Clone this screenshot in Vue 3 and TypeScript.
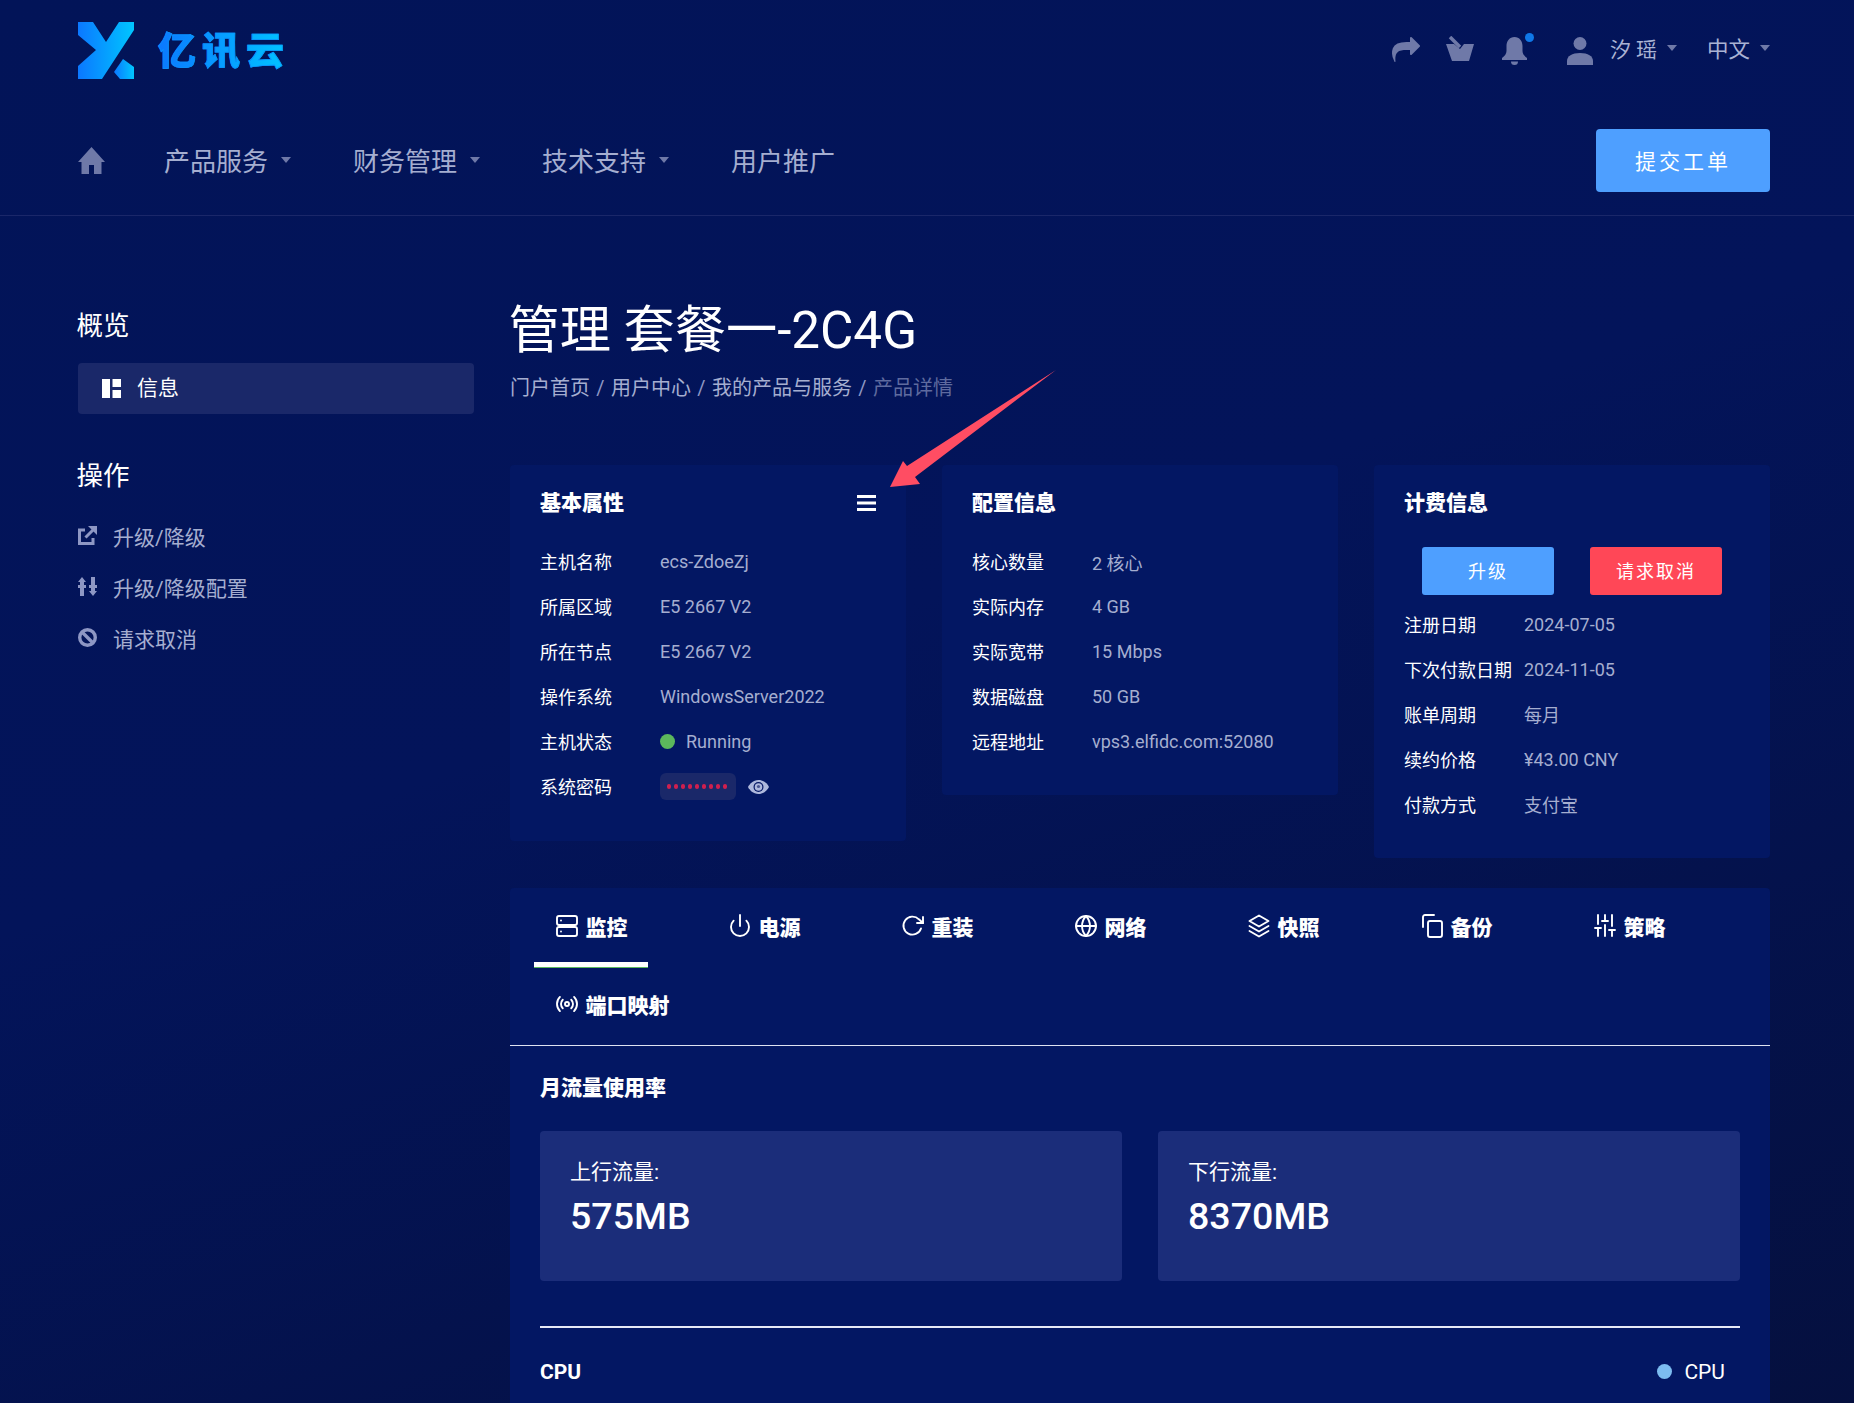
<script setup lang="ts">
interface Row {
  label: string
  value: string
}

const navItems = [
  { label: '产品服务', caret: true },
  { label: '财务管理', caret: true },
  { label: '技术支持', caret: true },
  { label: '用户推广', caret: false },
]

const crumbs = ['门户首页', '用户中心', '我的产品与服务']

const basicRows: Row[] = [
  { label: '主机名称', value: 'ecs-ZdoeZj' },
  { label: '所属区域', value: 'E5 2667 V2' },
  { label: '所在节点', value: 'E5 2667 V2' },
  { label: '操作系统', value: 'WindowsServer2022' },
]

const configRows: Row[] = [
  { label: '核心数量', value: '2 核心' },
  { label: '实际内存', value: '4 GB' },
  { label: '实际宽带', value: '15 Mbps' },
  { label: '数据磁盘', value: '50 GB' },
  { label: '远程地址', value: 'vps3.elfidc.com:52080' },
]

const billingRows: Row[] = [
  { label: '注册日期', value: '2024-07-05' },
  { label: '下次付款日期', value: '2024-11-05' },
  { label: '账单周期', value: '每月' },
  { label: '续约价格', value: '¥43.00 CNY' },
  { label: '付款方式', value: '支付宝' },
]

const tabs = [
  {
    label: '监控',
    icon: '<rect x="2" y="2" width="20" height="9" rx="2"/><rect x="2" y="13" width="20" height="9" rx="2"/><path d="M6 6.5h.01M6 17.5h.01"/>',
  },
  { label: '电源', icon: '<path d="M18.36 6.64a9 9 0 1 1-12.73 0"/><path d="M12 1v11"/>' },
  { label: '重装', icon: '<path d="M22 3v6h-6"/><path d="M20 14.5a9 9 0 1 1-2.1-9.2L22 9"/>' },
  {
    label: '网络',
    icon: '<circle cx="12" cy="12" r="10"/><path d="M2 12h20"/><path d="M12 2a15.3 15.3 0 0 1 4 10 15.3 15.3 0 0 1-4 10 15.3 15.3 0 0 1-4-10 15.3 15.3 0 0 1 4-10z"/>',
  },
  { label: '快照', icon: '<path d="M12 1.5 2.5 7l9.5 5.5L21.5 7z"/><path d="m2.5 12 9.5 5.5 9.5-5.5"/><path d="m2.5 17 9.5 5.5 9.5-5.5"/>' },
  { label: '备份', icon: '<rect x="8" y="7" width="14" height="16" rx="2"/><path d="M3 13V3a2 2 0 0 1 2-2h9"/>' },
  {
    label: '策略',
    icon: '<path d="M5 22v-8M5 10V1M12 22v-11M12 7V1M19 22v-6M19 12V1M2 14h6M9 7h6M16 16h6"/>',
  },
  {
    label: '端口映射',
    icon: '<circle cx="12" cy="12" r="2"/><path d="M16.24 7.76a6 6 0 0 1 0 8.49M7.76 16.24a6 6 0 0 1 0-8.49M19.07 4.93a10 10 0 0 1 0 14.14M4.93 19.07a10 10 0 0 1 0-14.14"/>',
  },
]

const traffic = [
  { label: '上行流量:', value: '575MB' },
  { label: '下行流量:', value: '8370MB' },
]
</script>

<template>
  <div class="page">
    <header class="header">
      <div class="topbar">
        <div class="logo">
          <svg class="logo-mark" viewBox="0 0 56 57">
            <defs>
              <linearGradient id="logoFill" x1="0" y1="0" x2="1" y2="0">
                <stop offset="0" stop-color="#0b78ff" />
                <stop offset="1" stop-color="#00c6ff" />
              </linearGradient>
            </defs>
            <path fill="url(#logoFill)" d="M0 0h15l13 20L41 0h15v8L24 57H0V44l18-16L0 13z" />
            <path fill="url(#logoFill)" d="M45 37l11 8v12H42l-6-7z" />
          </svg>
          <span class="logo-text">亿讯云</span>
        </div>
        <div class="top-actions">
          <svg class="ico share" viewBox="0 0 1792 1792">
            <path d="M1792 640q0 26-19 45l-512 512q-19 19-45 19t-45-19-19-45v-256h-224q-98 0-175.5 6t-154 21.5-133 42.5-105.5 69.5-80 101-48.5 138.5-17.5 181q0 55 5 123 0 6 2.5 23.5t2.5 26.5q0 15-8.5 25t-23.5 10q-16 0-28-17-7-9-13-22t-13.5-30-10.5-24q-127-285-127-451 0-199 53-333 162-403 875-403h224v-256q0-26 19-45t45-19 45 19l512 512q19 19 19 45z" />
          </svg>
          <svg class="ico basket" viewBox="0 0 28 25">
            <path d="M0 8h8l6 5 4-5h10l-5 17H6z" />
            <path d="M4 1l10 10" stroke="#6f79a8" stroke-width="3.5" />
          </svg>
          <span class="bell">
            <svg class="ico" viewBox="0 0 25 29">
              <path d="M12.5 1C7.5 1 4.5 5 4.5 10V15c0 3-2 5-4.5 7v2h25v-2C22.5 20 20.5 18 20.5 15v-5C20.5 5 17.5 1 12.5 1z" />
              <path d="M9 25.5h7a3.5 3.5 0 0 1-7 0z" />
            </svg>
            <i class="bell-dot"></i>
          </span>
          <svg class="ico user" viewBox="0 0 26 28">
            <circle cx="13" cy="6.5" r="6.5" />
            <path d="M0 28v-4c0-5 5-8 13-8s13 3 13 8v4z" />
          </svg>
          <span class="top-link user-name">汐瑶<i class="caret"></i></span>
          <span class="top-link lang">中文<i class="caret"></i></span>
        </div>
      </div>
      <div class="navbar">
        <nav class="nav">
          <svg class="home" viewBox="0 0 27 27">
            <path d="M13.5 0 27 15h-3.5v12H16v-9h-5v9H3.5V15H0z" />
          </svg>
          <a v-for="item in navItems" :key="item.label" class="nav-item">
            {{ item.label }}<i v-if="item.caret" class="caret"></i>
          </a>
        </nav>
        <button class="submit-btn">提交工单</button>
      </div>
    </header>

    <div class="body">
      <aside class="sidebar">
        <h3 class="side-title">概览</h3>
        <div class="side-active">
          <svg class="side-active-icon" viewBox="0 0 19 19">
            <path d="M0 0h8v19H0zM10.5 0H19v8h-8.5zM10.5 11H19v8h-8.5z" />
          </svg>
          <span class="side-active-text">信息</span>
        </div>
        <h3 class="side-title second">操作</h3>
        <ul class="side-links">
          <li>
            <svg class="side-icon" viewBox="0 0 19 19">
              <path d="M7 4H1.5v13.5H15V12" fill="none" stroke="#8e97c4" stroke-width="3" />
              <path d="M7.5 11.5 15 4" fill="none" stroke="#8e97c4" stroke-width="3" />
              <path d="M10 0h9v9z" />
            </svg>
            升级/降级
          </li>
          <li>
            <svg class="side-icon" viewBox="0 0 19 19">
              <path d="M4 0l4 5H6v14H2V5H0zM15 19l-4-5h2V0h4v14h2z" />
              <path d="M0 8h8v3H0zM11 8h8v3h-8z" />
            </svg>
            升级/降级配置
          </li>
          <li>
            <svg class="side-icon" viewBox="0 0 19 19">
              <circle cx="9.5" cy="9.5" r="7.8" fill="none" stroke="#8e97c4" stroke-width="3.4" />
              <path d="M4 4l11 11" stroke="#8e97c4" stroke-width="3.4" />
            </svg>
            请求取消
          </li>
        </ul>
      </aside>

      <main class="main">
        <h1 class="title">管理 套餐一-2C4G</h1>
        <div class="crumbs">
          <template v-for="crumb in crumbs" :key="crumb">
            <span>{{ crumb }}</span><span class="sep">/</span>
          </template>
          <span class="crumb-last">产品详情</span>
        </div>

        <div class="cards">
          <section class="card">
            <div class="card-head">
              <h4>基本属性</h4>
              <svg class="menu-icon" viewBox="0 0 19 16">
                <path d="M0 0h19v3H0zM0 6.5h19v3H0zM0 13h19v3H0z" />
              </svg>
            </div>
            <div v-for="row in basicRows" :key="row.label" class="row">
              <span class="row-label">{{ row.label }}</span>
              <span class="row-value">{{ row.value }}</span>
            </div>
            <div class="row">
              <span class="row-label">主机状态</span>
              <span class="row-value status"><i class="dot"></i>Running</span>
            </div>
            <div class="row">
              <span class="row-label">系统密码</span>
              <span class="row-value secret">
                <span class="pill"><i v-for="n in 9" :key="n"></i></span>
                <svg class="eye" viewBox="0 0 21 14">
                  <path d="M10.5 0C16 0 19.5 4 21 7c-1.5 3-5 7-10.5 7S1.5 10 0 7c1.5-3 5-7 10.5-7z" fill="#aeb8dc" />
                  <circle cx="10.5" cy="7" r="5" fill="#041764" />
                  <circle cx="10.5" cy="7" r="3.8" fill="#aeb8dc" />
                  <circle cx="10.5" cy="6.5" r="1.6" fill="#4a5690" />
                </svg>
              </span>
            </div>
          </section>

          <section class="card">
            <div class="card-head"><h4>配置信息</h4></div>
            <div v-for="row in configRows" :key="row.label" class="row">
              <span class="row-label">{{ row.label }}</span>
              <span class="row-value">{{ row.value }}</span>
            </div>
          </section>

          <section class="card">
            <div class="card-head"><h4>计费信息</h4></div>
            <div class="card-actions">
              <button class="btn primary">升级</button>
              <button class="btn danger">请求取消</button>
            </div>
            <div v-for="row in billingRows" :key="row.label" class="row">
              <span class="row-label">{{ row.label }}</span>
              <span class="row-value">{{ row.value }}</span>
            </div>
          </section>
        </div>

        <section class="panel">
          <div class="tabs">
            <a v-for="(tab, i) in tabs" :key="tab.label" :class="['tab', { active: i === 0 }]">
              <svg
                class="tab-icon"
                viewBox="0 0 24 24"
                fill="none"
                stroke="currentColor"
                stroke-width="1.9"
                stroke-linecap="round"
                stroke-linejoin="round"
                v-html="tab.icon"
              ></svg>
              {{ tab.label }}
            </a>
          </div>
          <div class="panel-body">
            <h4 class="panel-title">月流量使用率</h4>
            <div class="stats">
              <div v-for="item in traffic" :key="item.label" class="stat">
                <div class="stat-label">{{ item.label }}</div>
                <div class="stat-value">{{ item.value }}</div>
              </div>
            </div>
            <hr class="divider" />
            <div class="chart-head">
              <h4>CPU</h4>
              <span class="legend"><i></i>CPU</span>
            </div>
          </div>
        </section>

        <svg class="arrow" viewBox="0 0 170 120">
          <path d="M0 117 13 91 17 96 166 0 25 107 30 114z" />
        </svg>
      </main>
    </div>
  </div>
</template>

<style>
html,
body {
  margin: 0;
  background: #021356;
}
</style>

<style scoped>
.page {
  height: 100vh;
  overflow: hidden;
  font-family: Roboto, "Noto Sans CJK SC", sans-serif;
  color: #fff;
  background: linear-gradient(160deg, #021458 0%, #03145a 45%, #05103f 100%);
}

/* Header */
.header {
  height: 216px;
  box-sizing: border-box;
  padding: 0 84px 0 78px;
  border-bottom: 1px solid #1a2769;
}

.topbar {
  display: flex;
  align-items: center;
  justify-content: space-between;
  height: 101px;
  padding-bottom: 8px;
}

.logo {
  display: flex;
  align-items: center;
  gap: 24px;
}

.logo-mark {
  width: 56px;
  height: 57px;
}

.logo-text {
  font-size: 38px;
  line-height: 42px;
  font-weight: 900;
  letter-spacing: 6px;
  background: linear-gradient(90deg, #0b78ff, #00c6ff);
  -webkit-background-clip: text;
  background-clip: text;
  color: transparent;
  -webkit-text-stroke: 0.7px #0a94ff;
}

.top-actions {
  display: flex;
  align-items: center;
  color: #aab3d4;
  font-size: 21px;
}

.ico {
  display: block;
  fill: #6f79a8;
}

.share {
  width: 28px;
  height: 28px;
  margin: -2px 26px 0 0;
}

.basket {
  width: 28px;
  height: 25px;
  margin-right: 28px;
  margin-top: -4px;
}

.bell {
  position: relative;
  width: 25px;
  height: 29px;
  margin-right: 40px;
}

.bell-dot {
  position: absolute;
  top: -3px;
  right: -7px;
  width: 9px;
  height: 9px;
  border-radius: 50%;
  background: #0f78e8;
}

.user {
  width: 26px;
  height: 28px;
  margin-right: 17px;
}

.top-link {
  display: flex;
  align-items: center;
  margin-top: -6px;
}

.user-name {
  letter-spacing: 5px;
  margin-right: 30px;
}

.lang {
  font-size: 21.5px;
}

.lang .caret {
  margin-left: 10px;
}

.caret {
  display: inline-block;
  width: 0;
  height: 0;
  margin-left: 5px;
  border-style: solid;
  border-width: 6px 5.5px 0;
  border-color: #6f79a8 transparent transparent;
  vertical-align: middle;
}

.navbar {
  display: flex;
  align-items: flex-start;
  justify-content: space-between;
  padding-top: 20px;
}

.nav {
  display: flex;
  align-items: center;
  height: 63px;
}

.home {
  width: 27px;
  height: 27px;
  fill: #6f79a8;
  margin-right: 59px;
}

.nav-item {
  display: flex;
  align-items: center;
  width: 189px;
  margin-top: -2px;
  font-size: 26px;
  color: #a5aed0;
}

.nav-item .caret {
  margin-left: 13px;
}

.submit-btn {
  width: 174px;
  height: 63px;
  padding: 0 0 2px;
  border: none;
  border-radius: 4px;
  background: #4e9fff;
  color: #fff;
  font: inherit;
  font-size: 21px;
  letter-spacing: 3px;
}

/* Body layout */
.body {
  display: flex;
  gap: 36px;
  padding: 0 84px 0 78px;
}

.sidebar {
  width: 396px;
  flex: none;
  padding-top: 92px;
}

.side-title {
  margin: 0 0 0 -1.5px;
  font-size: 26.5px;
  line-height: 36px;
  font-weight: 400;
}

.side-title.second {
  margin-top: 44px;
}

.side-active {
  display: flex;
  align-items: center;
  gap: 16px;
  height: 51px;
  margin-top: 19px;
  padding-left: 24px;
  border-radius: 4px;
  background: #1a2869;
  font-size: 21px;
}

.side-active-text {
  margin-top: -5px;
}

.side-active-icon {
  width: 19px;
  height: 19px;
  fill: #fff;
}

.side-links {
  list-style: none;
  margin: 16px 0 0;
  padding: 0;
}

.side-links li {
  display: flex;
  align-items: center;
  gap: 16px;
  height: 51px;
  font-size: 21px;
  color: #a5aed0;
}

.side-icon {
  width: 19px;
  height: 19px;
  fill: #8e97c4;
}

.main {
  position: relative;
  flex: 1;
  min-width: 0;
  padding-top: 84px;
}

.title {
  margin: 1px 0 -1px -1.5px;
  font-size: 51.2px;
  line-height: 60px;
  font-weight: 400;
}

.crumbs {
  margin-top: 13px;
  font-size: 20px;
  line-height: 30px;
  color: #a5aed0;
}

.sep {
  display: inline-block;
  width: 21px;
  text-align: center;
  color: #8e97c4;
}

.crumb-last {
  color: #5f6b9f;
}

.cards {
  display: flex;
  align-items: flex-start;
  gap: 36px;
  margin-top: 62px;
}

.card {
  flex: 1;
  min-width: 0;
  padding: 22px 30px 31px;
  border-radius: 4px;
  background: #031763;
}

.card:first-child {
  padding-bottom: 32px;
}

.card-head {
  display: flex;
  align-items: center;
  justify-content: space-between;
  margin-bottom: 20px;
}

.card-head h4 {
  margin: 0;
  font-size: 21px;
  line-height: 32px;
  font-weight: 900;
}

.menu-icon {
  width: 19px;
  height: 16px;
  fill: #fff;
}

.row {
  display: flex;
  align-items: center;
  height: 45px;
  font-size: 18px;
}

.row-label {
  width: 120px;
  flex: none;
  margin-top: -1px;
}

.row-value {
  color: #a5aed0;
}

.status,
.secret {
  display: flex;
  align-items: center;
}

.dot {
  width: 15px;
  height: 15px;
  margin-right: 11px;
  border-radius: 50%;
  background: #5cb85c;
}

.pill {
  display: flex;
  align-items: center;
  gap: 2.6px;
  width: 76px;
  height: 27px;
  padding-left: 7px;
  box-sizing: border-box;
  border-radius: 6px;
  background: #1a2869;
}

.pill i {
  width: 4.4px;
  height: 4.4px;
  border-radius: 50%;
  background: #d01f4e;
}

.eye {
  width: 21px;
  height: 14px;
  margin-left: 12px;
}

.card-actions {
  display: flex;
  gap: 36px;
  margin: 28px 0 6.5px 18px;
}

.btn {
  width: 132px;
  height: 48px;
  padding: 0 0 2px;
  border: none;
  border-radius: 3px;
  color: #fff;
  font: inherit;
  font-size: 18px;
  letter-spacing: 2px;
}

.primary {
  background: #4e9fff;
}

.danger {
  background: #ff4757;
}

/* Tabs panel */
.panel {
  margin-top: 30.5px;
  border-radius: 4px;
  background: #031763;
}

.tabs {
  display: flex;
  flex-wrap: wrap;
  column-gap: 59px;
  padding: 0 24px 1px;
  border-bottom: 1px solid #dfe3f2;
}

.tab {
  position: relative;
  display: flex;
  align-items: center;
  gap: 8px;
  height: 78px;
  box-sizing: border-box;
  padding: 0 20.5px 2px 22px;
  font-size: 21px;
  font-weight: 900;
  color: #fff;
}

.tab.active::after {
  content: "";
  position: absolute;
  left: 0;
  right: 0;
  bottom: -1px;
  height: 5px;
  background: #fff;
  box-shadow: 0 1px 0 #5cb85c;
}

.tab-icon {
  width: 24px;
  height: 24px;
  margin: 0 -1px 0 -1.5px;
}

.panel-body {
  padding: 26px 30px 80px;
}

.panel-title {
  margin: 0;
  font-size: 21px;
  line-height: 32px;
  font-weight: 900;
}

.stats {
  display: flex;
  gap: 36px;
  margin-top: 27px;
}

.stat {
  flex: 1;
  height: 150px;
  box-sizing: border-box;
  padding: 26px 30px;
  border-radius: 4px;
  background: #1b2d7a;
}

.stat-label {
  font-size: 21px;
  line-height: 30px;
}

.stat-value {
  margin-top: 6px;
  font-size: 37.6px;
  line-height: 46px;
  font-weight: 500;
}

.divider {
  margin: 45px 0 0;
  border: none;
  height: 1.5px;
  background: #e6e9f5;
}

.chart-head {
  display: flex;
  align-items: center;
  justify-content: space-between;
  margin-top: 29px;
  padding-right: 15px;
  height: 30px;
}

.chart-head h4 {
  margin: 0;
  font-size: 21px;
  font-weight: 700;
}

.legend {
  display: flex;
  align-items: center;
  gap: 12px;
  font-size: 21px;
}

.legend i {
  width: 15px;
  height: 15px;
  border-radius: 50%;
  background: #7cbcf0;
}

/* annotation arrow over the page */
.arrow {
  position: absolute;
  left: 380px;
  top: 154px;
  width: 170px;
  height: 120px;
  fill: #ff4d63;
}
</style>
